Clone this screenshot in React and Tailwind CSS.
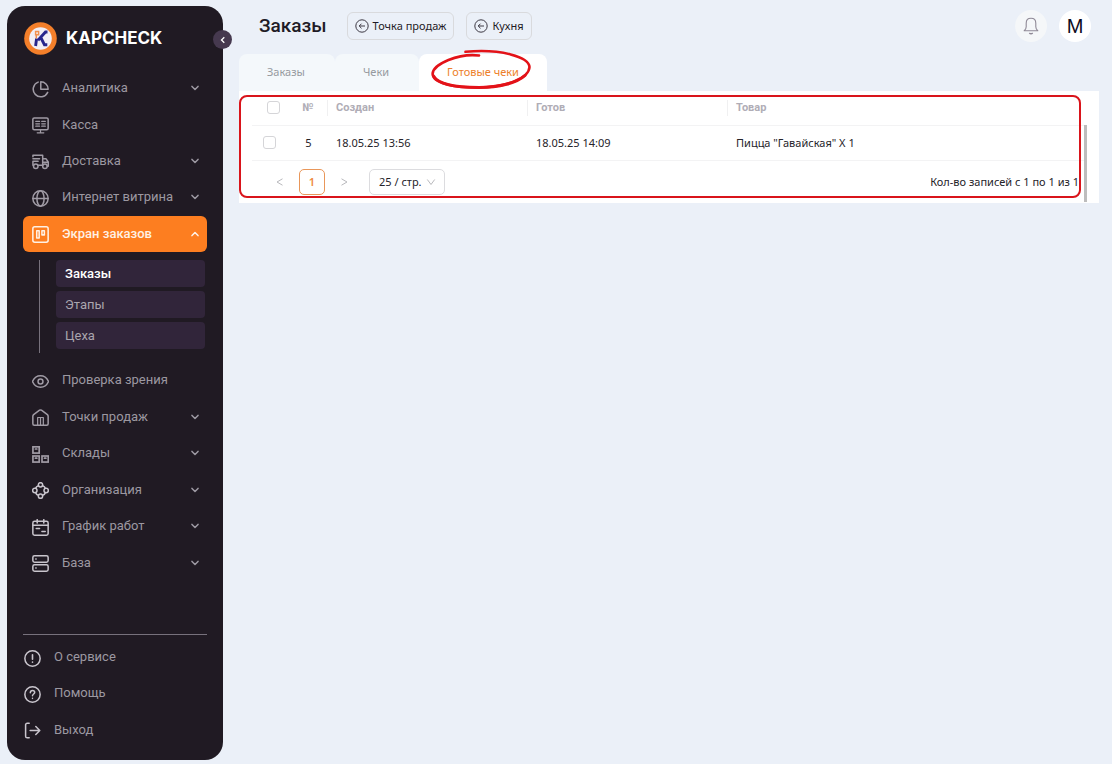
import React from "react";

function Icon({ children, className = "text-[#a09ba5]" }) {
  return (
    <svg
      aria-hidden="true"
      viewBox="0 0 18 18"
      className={`relative top-px h-[17px] w-[17px] shrink-0 ${className}`}
      fill="none"
      stroke="currentColor"
      strokeWidth="1.6"
      strokeLinecap="round"
      strokeLinejoin="round"
    >
      {children}
    </svg>
  );
}

const icons = {
  analytics: (
    <>
      <path d="M6.500 1.200A8 8 0 1 0 16.600 12" />
      <path d="M9.300 .9v7.800h7.800A7.800 7.800 0 0 0 9.300.9z" />
    </>
  ),
  cash: (
    <>
      <rect x=".9" y="1" width="16.200" height="12.400" rx="1.500" />
      <path d="M4 4.700h4M4 7.200h4M4 9.700h4M10.300 4.700h3.800M10.300 7.200h3.800M10.300 9.700h3.800M9 13.500v2.800M5.500 16.800h7" strokeWidth="1.300" />
    </>
  ),
  delivery: (
    <>
      <path d="M1 4V2.500h10.300V13H7M1 6.200h7M1 8.800h5.500M1 8.800V13M11.300 6h3.400l2.500 3.500V14h-1M11.300 9.800h5.600" />
      <circle cx="4" cy="14" r="2.400" />
      <circle cx="13.700" cy="14" r="2.400" />
    </>
  ),
  globe: (
    <>
      <circle cx="9" cy="9" r="8.100" />
      <ellipse cx="9" cy="9" rx="3.800" ry="8.100" />
      <path d="M1 9h16" />
    </>
  ),
  board: (
    <>
      <rect x=".9" y=".9" width="16.200" height="16.200" rx="2" />
      <rect x="5" y="5" width="2.600" height="7.600" />
      <rect x="10.500" y="5" width="2.600" height="4.400" />
    </>
  ),
  eye: (
    <>
      <path d="M.5 9C2 5.600 5 3 9 3s7 2.600 8.500 6C16 12.400 13 15 9 15S2 12.400.5 9z" />
      <circle cx="9" cy="9" r="2.600" />
    </>
  ),
  home: (
    <>
      <path d="M.9 7.600Q.9 6.700 1.700 6L8 1.300q1-.7 2 0L16.300 6q.8.700.8 1.600v8a1.500 1.500 0 0 1-1.500 1.500H2.400a1.500 1.500 0 0 1-1.500-1.500z" />
      <path d="M6 17V9h6v8M9 9v8" strokeWidth="1.300" />
    </>
  ),
  boxes: (
    <g strokeWidth="1.800" strokeLinejoin="miter">
      <rect x="1" y=".9" width="6.600" height="6.600" />
      <rect x="1" y="10.600" width="6.600" height="6.400" />
      <rect x="10.600" y="10.600" width="6.600" height="6.400" />
      <path d="M3.600 3.200h1.500M3.600 12.900h1.500M13.200 12.900h1.500" />
    </g>
  ),
  organization: (
    <>
      <circle cx="9" cy="3" r="2.300" />
      <circle cx="9" cy="15" r="2.300" />
      <circle cx="3" cy="9" r="2.300" />
      <circle cx="15" cy="9" r="2.300" />
      <path d="M6.800 3.800Q4.500 4.700 3.900 6.700M11.200 3.800q2.300.9 2.900 2.900M6.800 14.200q-2.300-.9-2.900-2.900M11.200 14.200q2.300-.9 2.900-2.900" />
    </>
  ),
  calendar: (
    <>
      <rect x=".9" y="2.500" width="16.200" height="14.600" rx="1.800" />
      <path d="M1 6.500h16M5.500.7v3.500M12.500.7v3.500M4.500 10h3.500M10.500 13.300h3.500" />
    </>
  ),
  database: (
    <>
      <rect x=".9" y=".9" width="16.200" height="6.700" rx="1.800" />
      <rect x=".9" y="10.400" width="16.200" height="6.700" rx="1.800" />
      <path d="M4 4.300h.4M4 13.800h.4" />
    </>
  ),
  about: (
    <>
      <circle cx="9" cy="9" r="8.100" />
      <path d="M9 5v4.700M9 12.700v.2" strokeWidth="1.700" />
    </>
  ),
  help: (
    <>
      <circle cx="9" cy="9" r="8.100" />
      <path d="M6.700 7.200C6.700 5.600 7.700 4.700 9 4.700s2.300.9 2.300 2.100c0 1.600-2.300 1.800-2.300 3.500M9 12.900v.2" />
    </>
  ),
  exit: (
    <path d="M5.500 1.300H3.400a1.700 1.700 0 0 0-1.700 1.700v12a1.700 1.700 0 0 0 1.700 1.700h2.100M6.500 9h10M12.500 4.800 16.700 9l-4.200 4.200" />
  ),
};

function Chevron({ up }) {
  return (
    <svg aria-hidden="true" viewBox="0 0 8 6" className="ml-auto h-[6px] w-[8px]" fill="none" stroke="currentColor" strokeWidth="1.5" strokeLinecap="round" strokeLinejoin="round">
      <path d={up ? "M1 4.600 4 1.500l3 3.100" : "M1 1.400 4 4.500l3-3.100"} />
    </svg>
  );
}

const mainItems = [
  { label: "Аналитика", icon: "analytics", expandable: true },
  { label: "Касса", icon: "cash" },
  { label: "Доставка", icon: "delivery", expandable: true },
  { label: "Интернет витрина", icon: "globe", expandable: true },
  { label: "Экран заказов", icon: "board", expandable: true, active: true },
];

const moreItems = [
  { label: "Проверка зрения", icon: "eye" },
  { label: "Точки продаж", icon: "home", expandable: true },
  { label: "Склады", icon: "boxes", expandable: true },
  { label: "Организация", icon: "organization", expandable: true, bright: true },
  { label: "График работ", icon: "calendar", expandable: true, bright: true },
  { label: "База", icon: "database", expandable: true, bright: true },
];

function NavItem({ item }) {
  const iconColor = item.active ? "text-[#fff1e5]" : item.bright ? "text-[#c9c5cd]" : "text-[#a09ba5]";
  return (
    <li>
      <a
        href="#"
        className={`flex h-full items-center gap-[13px] rounded-md pr-2 pl-[9px] ${
          item.active ? "bg-[#fd7e20] font-medium text-[#fff1e5]" : "text-[#9c98a1]"
        }`}
      >
        <Icon className={iconColor}>{icons[item.icon]}</Icon>
        <span>{item.label}</span>
        {item.expandable && <Chevron up={item.active} />}
      </a>
    </li>
  );
}

function Sidebar() {
  return (
    <aside className="relative flex w-[216px] shrink-0 flex-col rounded-[18px] bg-[#201a23] px-4 pb-3 font-['Roboto','Liberation_Sans',sans-serif] text-[13px] leading-4">
      <a href="#" className="flex h-16 items-center gap-[9px] pl-px text-white">
        <svg aria-hidden="true" viewBox="0 0 33 33" className="h-[33px] w-[33px]">
          <circle cx="16.500" cy="16.500" r="16.300" fill="#f47f2a" />
          <circle cx="16.500" cy="16.500" r="11.300" fill="#f2eff5" />
          <path d="M12.600 16.500 11.600 24M23.500 10h-2l-7.500 8.200M16.800 15.500l3.700 7.300h2.800" fill="none" stroke="#28268c" strokeWidth="2.900" />
          <path d="M11.600 9.500h3v3.200h-3zM12.300 12.700v3.800" fill="none" stroke="#f2904d" strokeWidth="1.500" />
        </svg>
        <span className="font-['Inter','Liberation_Sans',sans-serif] text-[17px] font-bold">KAPCHECK</span>
      </a>
      <button
        type="button"
        aria-label="Свернуть меню"
        className="absolute top-6 -right-[9px] flex h-[19px] w-[19px] items-center justify-center rounded-full bg-[#46394f] text-white"
      >
        <svg aria-hidden="true" viewBox="0 0 6 8" className="h-2 w-[6px]" fill="none" stroke="currentColor" strokeWidth="1.300">
          <path d="M4.300 1.200 1.500 4l2.800 2.800" />
        </svg>
      </button>
      <nav>
        <ul className="grid min-h-[182px] auto-rows-fr">
          {mainItems.map((item) => (
            <NavItem key={item.label} item={item} />
          ))}
        </ul>
        <ul className="mt-2 mr-[2px] mb-[9px] ml-4 flex flex-col gap-1 border-l border-[#77717c] pb-1 pl-4">
          {["Заказы", "Этапы", "Цеха"].map((label, i) => (
            <li key={label}>
              <a
                href="#"
                className={`flex h-[27px] items-center rounded bg-[#31253a] pl-[9px] ${
                  i === 0 ? "font-medium text-white" : "text-[#aaa5ae]"
                }`}
              >
                {label}
              </a>
            </li>
          ))}
        </ul>
        <ul className="grid min-h-[219px] auto-rows-fr">
          {moreItems.map((item) => (
            <NavItem key={item.label} item={item} />
          ))}
        </ul>
      </nav>
      <ul className="mt-auto grid min-h-[114px] auto-rows-fr border-t border-[#77717c] pt-1">
        {[
          ["О сервисе", "about"],
          ["Помощь", "help"],
          ["Выход", "exit"],
        ].map(([label, icon]) => (
          <li key={label}>
            <a href="#" className="flex h-full items-center gap-[13px] pl-px text-[#9c98a1]">
              <Icon className="text-[#c9c5cd]">{icons[icon]}</Icon>
              {label}
            </a>
          </li>
        ))}
      </ul>
    </aside>
  );
}

function HeaderButton({ children }) {
  return (
    <button type="button" className="flex h-7 items-center gap-1 rounded-md border border-[#d9dadd] px-[7px] text-[11px] text-[#1f1b26]">
      <svg aria-hidden="true" viewBox="0 0 14 14" className="h-[14px] w-[14px]" fill="none" stroke="#3c3843" strokeWidth="1">
        <circle cx="7" cy="7" r="6.200" />
        <path d="M10 7H4.300M6.500 4.700 4.200 7l2.300 2.300" />
      </svg>
      {children}
    </button>
  );
}

function Header() {
  return (
    <header className="flex h-12 items-center pr-2 pl-5">
      <h1 className="font-['Roboto','Liberation_Sans',sans-serif] text-[19px] font-medium text-[#1f1b26]">Заказы</h1>
      <div className="ml-5 flex gap-3">
        <HeaderButton>Точка продаж</HeaderButton>
        <HeaderButton>Кухня</HeaderButton>
      </div>
      <div className="ml-auto flex gap-3">
        <button type="button" aria-label="Уведомления" className="flex h-8 w-8 items-center justify-center rounded-full bg-[#f5f7f9]">
          <svg aria-hidden="true" viewBox="0 0 16 18" className="h-[18px] w-4" fill="none" stroke="#8f8996" strokeWidth="1.100" strokeLinejoin="round">
            <path d="M1.200 13.800h13.600c-1.500-1.200-2-2.300-2-4V6.200C12.800 3.300 11 1.300 8 1.300S3.200 3.300 3.200 6.200v3.600c0 1.700-.5 2.800-2 4z" />
            <path d="M6.300 16q1.700 1.600 3.400 0" strokeWidth="1.500" />
          </svg>
        </button>
        <button type="button" className="flex h-8 w-8 items-center justify-center rounded-full bg-white font-['Liberation_Sans',sans-serif] text-[20px] text-[#0c0b1c]">
          M
        </button>
      </div>
    </header>
  );
}

function Tabs() {
  return (
    <div role="tablist" className="flex h-[37px] text-[11px] text-[#969aa0]">
      <button type="button" role="tab" aria-selected="false" className="rounded-t-lg bg-[#f4f8fb] pr-[30px] pl-7">
        Заказы
      </button>
      <button type="button" role="tab" aria-selected="false" className="rounded-t-lg bg-[#f4f8fb] pr-[30px] pl-7">
        Чеки
      </button>
      <button type="button" role="tab" aria-selected="true" className="relative rounded-t-lg bg-white px-7 text-[#ed7f2b]">
        Готовые чеки
        <svg aria-hidden="true" viewBox="0 0 102 42" className="absolute -top-[5px] left-3 z-10 h-[42px] w-[102px]" fill="none" stroke="#e31218" strokeWidth="2.600" strokeLinecap="round">
          <path d="M48 6.500C28 4 2 15 1.600 25c.4 9 21 14 46.400 13.500C76 38 98 29 98.500 18 98 8 70-.5 34.500 2.800" />
          <path d="M2.500 27C7 35 25 38.500 48 38.500c20 0 38-4.500 46-12" strokeWidth="3" />
        </svg>
      </button>
    </div>
  );
}

function Checkbox({ label }) {
  return (
    <input
      type="checkbox"
      aria-label={label}
      className="block h-[13px] w-[13px] appearance-none rounded-[3px] border border-[#d5d5d8] bg-white checked:bg-[#fd7e20]"
    />
  );
}

function OrdersTable() {
  const headCell = "h-[34px] p-0 text-left font-['Roboto','Liberation_Sans',sans-serif] font-bold";
  return (
    <table className="w-full table-fixed border-collapse text-[11px] leading-4 text-[#252329]">
      <colgroup>
        <col className="w-[37px]" />
        <col className="w-[39px]" />
        <col className="w-[200px]" />
        <col className="w-[200px]" />
        <col />
      </colgroup>
      <thead>
        <tr className="border-b border-[#f3f3f4] text-[#b0adb6]">
          <th className={headCell}>
            <div className="pl-[15px]">
              <Checkbox label="Выбрать все" />
            </div>
          </th>
          <th className={headCell}>
            <div className="border-r border-[#f0f0f1] text-center">№</div>
          </th>
          <th className={headCell}>
            <div className="border-r border-[#f0f0f1] pl-2">Создан</div>
          </th>
          <th className={headCell}>
            <div className="border-r border-[#f0f0f1] pl-2">Готов</div>
          </th>
          <th className={headCell}>
            <div className="pl-2">Товар</div>
          </th>
        </tr>
      </thead>
      <tbody>
        <tr className="h-[35px] border-b border-[#f3f3f4]">
          <td className="pl-[11px]">
            <Checkbox label="Выбрать чек 5" />
          </td>
          <td className="text-center">5</td>
          <td className="pl-2">18.05.25 13:56</td>
          <td className="pl-2">18.05.25 14:09</td>
          <td className="pl-2">Пицца "Гавайская" X 1</td>
        </tr>
      </tbody>
    </table>
  );
}

function Arrow({ d, className }) {
  return (
    <svg aria-hidden="true" viewBox="0 0 8 8" className={`h-2 w-2 overflow-visible ${className || ""}`} fill="none" stroke="#b9b9bd" strokeWidth="1">
      <path d={d} />
    </svg>
  );
}

function Pagination() {
  return (
    <div className="flex h-[42px] items-center pl-5 text-[11px] leading-4 text-[#252329]">
      <button type="button" aria-label="Назад" className="flex h-[26px] w-4 items-center justify-center">
        <Arrow d="M6.500 .8 1 4l5.500 3.200" />
      </button>
      <button type="button" aria-current="page" className="ml-[11px] h-[26px] w-[26px] rounded-[5px] border border-[#e9975a] font-semibold text-[#ee8a3e]">
        1
      </button>
      <button type="button" aria-label="Вперёд" className="ml-[11px] flex h-[26px] w-4 items-center justify-center">
        <Arrow d="M1.500 .8 7 4 1.500 7.200" />
      </button>
      <div className="relative ml-[17px]">
        <select aria-label="Записей на странице" className="block h-[26px] w-[76px] appearance-none rounded-[5px] border border-[#dcdcdf] bg-white pl-[9px]">
          <option>25 / стр.</option>
          <option>50 / стр.</option>
        </select>
        <Arrow d="M.3 1.500 4 6.500l3.700-5" className="pointer-events-none absolute top-[9px] right-[10px]" />
      </div>
      <p className="ml-auto pr-[5px]">Кол-во записей с 1 по 1 из 1</p>
    </div>
  );
}

export default function App() {
  return (
    <div className="flex min-h-screen bg-[#ebf0f8] pt-[6px] pr-[13px] pb-1 pl-[7px] font-['Noto_Sans','Liberation_Sans',sans-serif]">
      <Sidebar />
      <main className="ml-4 min-w-0 flex-1">
        <div className="-mt-1 mb-1">
          <Header />
        </div>
        <Tabs />
        <section className="relative bg-white pr-[15px] pl-[13px]">
          <OrdersTable />
          <Pagination />
          <div className="pointer-events-none absolute top-1 right-[18px] bottom-[5px] left-0 rounded-lg border-2 border-[#d9141b]" />
          <div className="absolute right-3 bottom-px h-[77px] w-[3px] bg-[#bdbdbd]" />
        </section>
      </main>
    </div>
  );
}
